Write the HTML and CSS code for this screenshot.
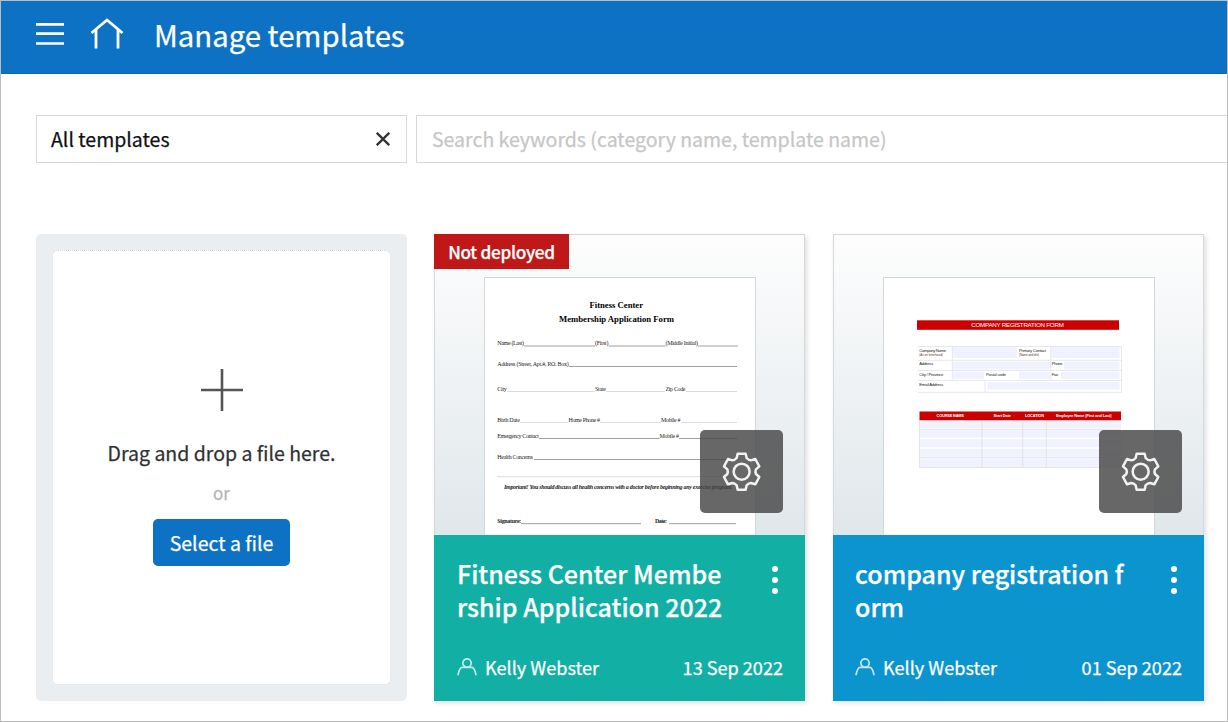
FILE: index.html
```html
<!DOCTYPE html>
<html lang="en">
<head>
<meta charset="utf-8">
<title>Manage templates</title>
<link rel="stylesheet" href="styles.css">
</head>
<body>
<svg width="0" height="0" class="defs">
  <symbol id="gear" viewBox="-62 -62 124 124">
    <path d="M-15 -41 L-12 -54 H12 L15 -41 Q21 -34 28 -34 L41 -38 L53 -16 L43 -7 Q40 0 43 7 L53 16 L41 38 L28 34 Q21 34 15 41 L12 54 H-12 L-15 41 Q-21 34 -28 34 L-41 38 L-53 16 L-43 7 Q-40 0 -43 -7 L-53 -16 L-41 -38 L-28 -34 Q-21 -34 -15 -41 Z"/>
    <circle r="24"/>
  </symbol>
  <symbol id="user" viewBox="0 0 20 18">
    <circle cx="10" cy="5" r="4.200"/>
    <path d="M.9 17.300C1.800 13.500 2.500 9.300 5 9.300H15C17.500 9.300 18.200 13.500 19.100 17.300"/>
  </symbol>
</svg>
<div class="app">
  <header class="topbar">
    <svg class="menu" width="28" height="24" viewBox="0 0 28 24"><path d="M0 2.300H28M0 11.700H28M0 21.500H28"/></svg>
    <svg class="home" width="34" height="32" viewBox="0 0 34 32"><path d="M1.500 15 L17 2 L32.500 15 M6 12 V30.500 M28 12 V30.500"/></svg>
    <h1 class="title">Manage templates</h1>
  </header>
  <main class="content">
    <div class="filters">
      <div class="select"><span>All templates</span><svg width="14" height="14" viewBox="0 0 14 14"><path d="M.8 .8 L13.200 13.200 M13.200 .8 L.8 13.200"/></svg></div>
      <div class="search">Search keywords (category name, template name)</div>
    </div>
    <div class="cards">
      <section class="drop">
        <div class="drop-inner">
          <svg class="plus" width="42" height="42" viewBox="0 0 42 42"><path d="M21 0V42M0 21H42"/></svg>
          <p class="drag">Drag and drop a file here.</p>
          <p class="or">or</p>
          <button class="pick">Select a file</button>
        </div>
      </section>

      <article class="card teal">
        <div class="preview">
          <span class="badge">Not deployed</span>
          <svg class="page serif" viewBox="485 278 270 257">
            <g class="heading">
              <text x="589.500" y="308.300" textLength="53.500">Fitness Center</text>
              <text x="559" y="322" textLength="115">Membership Application Form</text>
            </g>
            <text x="497.300" y="345.300" textLength="26.700">Name (Last)</text>
            <text x="595" y="345.300" textLength="13.500">(First)</text>
            <text x="665.500" y="345.300" textLength="32.500">(Middle Initial)</text>
            <text x="497.300" y="366.200" textLength="71.500">Address (Street, Apt.#, P.O. Box)</text>
            <text x="497.300" y="390.700" textLength="9.500">City</text>
            <text x="595" y="390.700" textLength="11">State</text>
            <text x="665.500" y="390.700" textLength="20">Zip Code</text>
            <text x="497.300" y="422" textLength="22.500">Birth Date</text>
            <text x="568.500" y="422" textLength="31.500">Home Phone #</text>
            <text x="661" y="422" textLength="19.500">Mobile #</text>
            <text x="497.300" y="438.200" textLength="41.500">Emergency Contact</text>
            <text x="659.500" y="438.200" textLength="19.500">Mobile #</text>
            <text x="497.300" y="459.200" textLength="35.500">Health Concerns</text>
            <text class="important" x="504" y="488.700" textLength="228.500">Important! You should discuss all health concerns with a doctor before beginning any exercise program.</text>
            <text class="strong" x="497.300" y="523.200" textLength="24">Signature:</text>
            <text class="strong" x="655" y="523.200" textLength="12">Date:</text>
            <path class="rule" d="M524 346H595M608.500 346H665.500M698 346H738M569 366.500H737M539 438.500H659.500M679 438.500H737M534 459.500H737M521 523.700H641M669 523.700H736"/>
            <path class="rule faint" d="M507 391.500H595M606 391.500H665M686 391.500H737M520 422.500H568M600 422.500H661M681 422.500H737M497 476.700H737"/>
          </svg>
          <div class="settings"><svg><use href="#gear"/></svg></div>
        </div>
        <div class="info">
          <div class="name-row">
            <h2><span>Fitness Center Membe</span><span>rship Application 2022</span></h2>
            <div class="dots"><i></i><i></i><i></i></div>
          </div>
          <div class="meta"><svg><use href="#user"/></svg><span class="owner">Kelly Webster</span><span class="date">13 Sep 2022</span></div>
        </div>
      </article>

      <article class="card blue">
        <div class="preview">
          <svg class="page sans" viewBox="884 278 270 257">
            <rect class="red" x="917" y="320.300" width="202" height="9.500"/>
            <text class="form-title" x="971.300" y="326.600" textLength="92.500">COMPANY REGISTRATION FORM</text>
            <g class="cell">
              <rect x="952.500" y="347" width="64.500" height="11"/>
              <rect x="1051.500" y="347" width="68" height="11"/>
              <rect x="952.500" y="361.500" width="98" height="8"/>
              <rect x="1064" y="361.500" width="55.500" height="8"/>
              <rect x="953" y="371.500" width="31" height="7.500"/>
              <rect x="1019" y="371.500" width="31" height="7.500"/>
              <rect x="1061" y="371.500" width="58.500" height="7.500"/>
              <rect x="987.500" y="382" width="132" height="7.500"/>
            </g>
            <path class="grid" d="M918 346.500H1121.500V392.300M918 360.300H1121.500M918 370.500H1121.500M918 380.500H1121.500M952.300 346V380M1050.800 346V380M985 381V392M918 392.300H1121.500"/>
            <text x="919.300" y="351.700" textLength="26.700">Company Name</text>
            <text class="hint" x="919.300" y="355.700" textLength="23.500">(As on letterhead)</text>
            <text x="1019" y="351.700" textLength="27">Primary Contact</text>
            <text class="hint" x="1019" y="355.700" textLength="20">(Name and title)</text>
            <text x="919.300" y="365.200" textLength="14">Address</text>
            <text x="1051.700" y="365.200" textLength="11">Phone</text>
            <text x="919.300" y="375.700" textLength="24">City / Province</text>
            <text x="986" y="375.700" textLength="20">Postal code</text>
            <text x="1051.700" y="375.700" textLength="6.500">Fax</text>
            <text x="919.300" y="385.700" textLength="24">Email Address</text>
            <rect class="red" x="919.500" y="411.500" width="201.500" height="9"/>
            <g class="column">
              <text x="936.500" y="416.500" textLength="27.500">COURSE NAME</text>
              <text x="993.500" y="416.500" textLength="17.500">Start Date</text>
              <text x="1025" y="416.500" textLength="19">LOCATION</text>
              <text x="1056" y="416.500" textLength="55.500">Employee Name (First and Last)</text>
            </g>
            <rect class="table" x="919.500" y="420.500" width="201.500" height="47"/>
            <path class="gap" d="M919.500 429.300H1121M919.500 438.500H1121M919.500 448H1121M919.500 457.500H1121"/>
            <path class="grid" d="M919.500 421V467.500H1121M982 421V467.500M1022.700 421V467.500M1046.300 421V467.500M919.500 429.500H1121M919.500 457.500H1121"/>
          </svg>
          <div class="settings"><svg><use href="#gear"/></svg></div>
        </div>
        <div class="info">
          <div class="name-row">
            <h2><span>company registration f</span><span>orm</span></h2>
            <div class="dots"><i></i><i></i><i></i></div>
          </div>
          <div class="meta"><svg><use href="#user"/></svg><span class="owner">Kelly Webster</span><span class="date">01 Sep 2022</span></div>
        </div>
      </article>
    </div>
  </main>
</div>
</body>
</html>
```
FILE: styles.css
```css
* { box-sizing: border-box; margin: 0; padding: 0; }
body { font-family: "Noto Sans CJK SC", "Noto Sans CJK JP", sans-serif; overflow: hidden; background: #fff; -webkit-text-stroke: .25px currentColor; }
svg { display: block; flex: none; }
.defs { position: absolute; }
.app { width: 1228px; height: 722px; border: 1px solid #bdbdbd; overflow: hidden; }

.topbar { height: 73px; background: #0d72c4; border-bottom: 1px solid #0a69b8; display: flex; align-items: flex-start; padding-left: 35px; color: #fff; }
.menu { margin: 21px 26px 0 0; stroke: #fff; stroke-width: 2.700; }
.home { margin-top: 17px; fill: none; stroke: #fff; stroke-width: 2.800; }
.title { margin-left: 30px; font-size: 29.300px; line-height: 40px; font-weight: 400; margin-top: 13px; white-space: nowrap; }

.content { padding: 41px 0 0 35px; }
.filters { display: flex; gap: 9px; height: 48px; }
.select, .search { border: 1px solid #d6d8da; height: 48px; line-height: 46px; font-size: 19.500px; padding: 0 14px; white-space: nowrap; }
.select { width: 371px; display: flex; align-items: center; justify-content: space-between; color: #111; padding-right: 16px; }
.select svg { fill: none; stroke: #333; stroke-width: 2.300; }
.search { flex: 1; border-right: 0; color: #c6c6c6; padding-left: 15px; }

.cards { display: flex; margin-top: 71px; }
.drop { width: 371px; height: 467px; border-radius: 5px; background: #eaeef1; padding: 16px; }
.drop-inner { height: 435px; border: 1px dotted #d5d9dc; border-radius: 6px; background: #fff; display: flex; flex-direction: column; align-items: center; }
.plus { margin-top: 118px; fill: none; stroke: #555; stroke-width: 2.600; }
.drag { margin-top: 27px; font-size: 19.500px; line-height: 30px; color: #2f3133; white-space: nowrap; }
.or { margin-top: 12px; font-size: 17px; line-height: 26px; color: #b5b5b5; }
.pick { margin-top: 13px; width: 137px; height: 47px; border: 0; border-radius: 5px; background: #0d72c4; color: #fff; font: 400 19.500px/47px "Noto Sans CJK SC", sans-serif; white-space: nowrap; }

.card { width: 371px; height: 467px; box-shadow: 2px 2px 5px rgba(0,0,0,.13); }
.teal { margin: 0 28px 0 27px; }
.preview { position: relative; height: 301px; border: 1px solid #d6d9db; border-bottom: 0; background: linear-gradient(#fdfdfd, #e0e7eb); padding: 42px 0 0 49px; }
.badge { position: absolute; left: -1px; top: -1px; width: 135px; height: 35px; background: #c01718; color: #fff; font-size: 17.200px; letter-spacing: -.3px; line-height: 35px; font-weight: 500; text-align: center; white-space: nowrap; }
.page { width: 272px; height: 258px; background: #fff; border: 1px solid #d3d7d9; border-bottom: 0; }
.settings { position: absolute; right: 21px; top: 195px; width: 83px; height: 83px; border-radius: 5px; background: rgba(70,70,70,.82); display: flex; align-items: center; justify-content: center; }
.settings svg { width: 41.300px; height: 41.300px; fill: none; stroke: #f2f2f2; stroke-width: 7.500; stroke-linejoin: round; }

.info { height: 166px; padding: 22px 22px 0; color: #fff; }
.teal .info { background: #11afa4; }
.teal .info { padding-left: 23px; }
.blue .info { background: #0c94cf; }
.name-row { display: flex; justify-content: space-between; height: 95px; }
h2 { font-size: 25px; line-height: 33px; font-weight: 500; white-space: nowrap; }
h2 span { display: block; }
.dots { width: 6px; margin: 9px 5.500px 0 0; display: flex; flex-direction: column; gap: 5px; }
.dots i { width: 6px; height: 6px; border-radius: 50%; background: #fff; }
.meta { display: flex; align-items: center; font-size: 18.100px; line-height: 30px; white-space: nowrap; }
.meta svg { width: 20px; height: 18px; fill: none; stroke: #fff; stroke-width: 1.700; opacity: .75; margin-right: 8px; }
.date { margin-left: auto; }

.page text { -webkit-text-stroke: 0; }
.serif { font-family: "Liberation Serif", serif; font-size: 6px; fill: #222; }
.serif .heading { font-size: 8.700px; font-weight: 700; fill: #000; }
.important { font-weight: 700; font-style: italic; }
.strong { font-weight: 700; }
.rule { stroke: #777; stroke-width: .7; fill: none; }
.faint { stroke: #ccc; }
.sans { font-family: "Liberation Sans", sans-serif; font-size: 4.200px; fill: #222; }
.red { fill: #cd0000; }
.form-title { font-size: 6.200px; fill: #fff; }
.column { fill: #fff; font-size: 3.900px; font-weight: 700; }
.cell, .table { fill: #f0f3ff; }
.hint { font-size: 3px; fill: #633; }
.grid { stroke: #d8d8d8; stroke-width: .6; fill: none; }
.gap { stroke: #fff; stroke-width: 1.600; }
```
